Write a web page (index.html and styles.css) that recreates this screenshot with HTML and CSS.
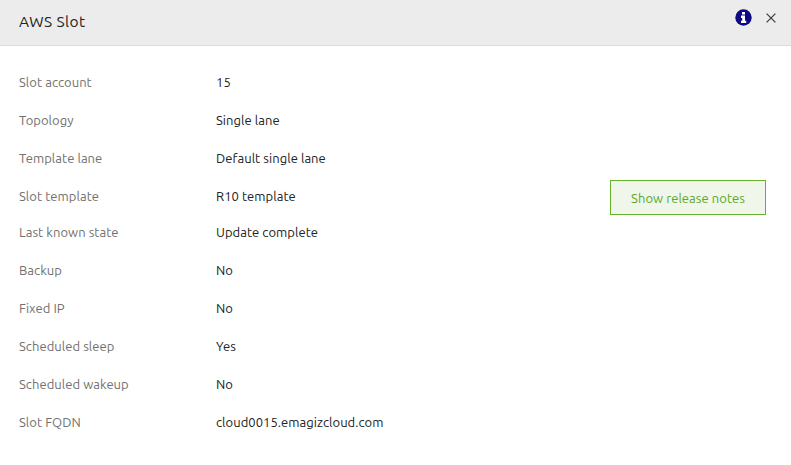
FILE: index.html
```html
<!DOCTYPE html>
<html lang="en">
<head>
<meta charset="utf-8">
<title>AWS Slot</title>
<link rel="stylesheet" href="styles.css">
</head>
<body>
<header class="header">
  <h1 class="title">AWS Slot</h1>
  <div class="actions">
    <svg class="info" viewBox="0 0 17 17"><circle cx="8.5" cy="8.5" r="8.2" fill="#0d0a82"/><path fill="#fff" d="M7 3h3v2.4H7zM6 6.6h4v5.1h1.2V14H6v-2.3h1.2V8.9H6z"/></svg>
    <svg class="close" viewBox="0 0 10 10"><path d="M.6.6l8.8 8.8M9.4.6L.6 9.4" stroke="#404040" stroke-width="1.3" fill="none"/></svg>
  </div>
</header>
<main>
  <dl class="details">
    <div class="row"><dt>Slot account</dt><dd>15</dd></div>
    <div class="row"><dt>Topology</dt><dd>Single lane</dd></div>
    <div class="row"><dt>Template lane</dt><dd>Default single lane</dd></div>
    <div class="row row-action"><dt>Slot template</dt><dd>R10 template</dd><dd class="action"><button class="button" type="button">Show release notes</button></dd></div>
    <div class="row"><dt>Last known state</dt><dd>Update complete</dd></div>
    <div class="row"><dt>Backup</dt><dd>No</dd></div>
    <div class="row"><dt>Fixed IP</dt><dd>No</dd></div>
    <div class="row"><dt>Scheduled sleep</dt><dd>Yes</dd></div>
    <div class="row"><dt>Scheduled wakeup</dt><dd>No</dd></div>
    <div class="row"><dt>Slot FQDN</dt><dd>cloud0015.emagizcloud.com</dd></div>
  </dl>
</main>
</body>
</html>
```
FILE: styles.css
```css
* { box-sizing: border-box; }
body {
  margin: 0;
  background: #fff;
  color: #222;
  font: 13px/38px Ubuntu, "Noto Sans", sans-serif;
  letter-spacing: 0.05px;
}
.header {
  display: flex;
  justify-content: space-between;
  height: 46px;
  padding: 0 15px 0 19px;
  background: #ececec;
  border-bottom: 1px solid #dcdcdc;
}
.title {
  margin: 0;
  font-size: 15.5px;
  font-weight: 400;
  line-height: 43px;
  letter-spacing: 0.4px;
}
.actions {
  display: flex;
  align-items: center;
  gap: 14px;
  height: 35px;
}
.info { width: 17px; height: 17px; }
.close { width: 10px; height: 10px; margin-top: 1px; }
.details {
  margin: 0;
  padding: 17px 25px 0 19px;
}
.row {
  display: grid;
  grid-template-columns: 197px 1fr auto;
  height: 38px;
}
.row-action { height: 36px; }
dt { color: #717171; }
dd { margin: 0; }
.action { padding-top: 3px; line-height: 0; }
.button {
  width: 156px;
  height: 35px;
  padding: 1px 0 0;
  border: 1px solid #66b32e;
  background: #f0f6ea;
  color: #5aa82a;
  font: inherit;
  line-height: 32px;
  letter-spacing: inherit;
}
```
